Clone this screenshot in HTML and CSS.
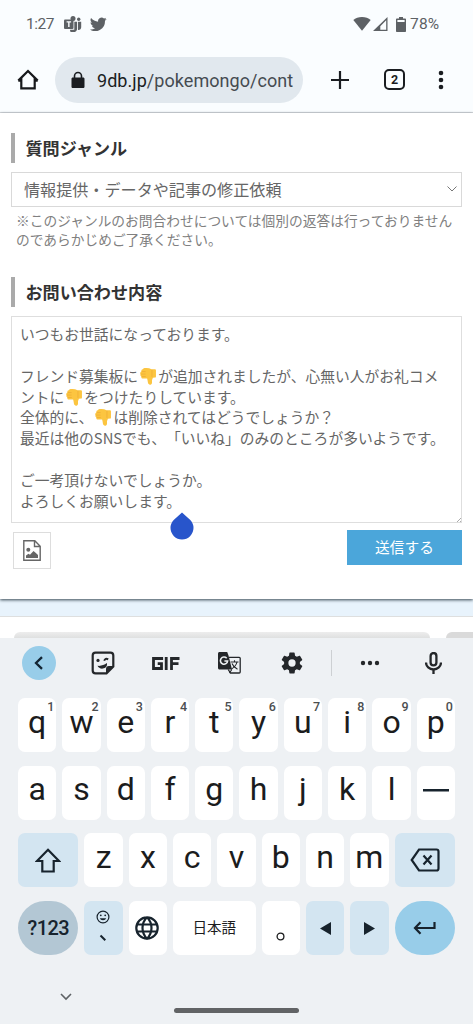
FILE: index.html
```
<!DOCTYPE html>
<html lang="ja">
<head>
<meta charset="utf-8">
<title>お問い合わせ</title>
<link rel="stylesheet" href="styles.css">
</head>
<body>
<svg class="defs" width="0" height="0">
  <symbol id="thumb" viewBox="0 0 18 19">
    <path fill="#fcc540" d="M2.200 4.700C1.700 3.400 2.300 2.500 3.400 2.400 4 1.200 5 1 6.300 1c2.300-.2 4.500.2 6.400 1.300h3.700c.6 0 1 .4 1 1v6.900c0 .6-.4 1-1 1l-2.200.2c-.6 1.400-1 2.300-1 3.500.1 1.500.2 3-1 3.600-1.600.7-3-.3-3.300-2.100-.3-1.500-.3-2.800-.8-4.200H3.700c-1.500-.1-2-1.100-1.600-2.200C.9 9.500.6 8.600 1.200 7.600.3 6.600.9 5.200 2.200 4.700z"/>
    <path fill="none" stroke="#eba934" stroke-width=".7" d="M2.200 4.800h4.300M1.400 7.500h5M2.200 10h4.500M13.200 3v7.500"/>
  </symbol>
</svg>

<header class="statusbar">
  <span class="clock">1:27</span>
  <svg class="teams" width="18" height="16" viewBox="0 0 18 16"><circle cx="9" cy="2.500" r="2.500"/><circle cx="14.700" cy="3.200" r="1.700"/><rect y="3.500" width="9.500" height="9.500" rx="1"/><path d="M10.300 5.700h2.800v7.500a4.200 4.200 0 0 1-7 2.100v-1.500h4.200zM14 5.700h3.200v5.600c0 1.700-1.300 2.800-3.200 2.600z"/><path d="M2.600 5.900h4.500M4.850 5.900v5" fill="none" stroke="#fafdff" stroke-width="1.400"/></svg>
  <svg class="bird" width="17" height="14" viewBox="0 2 24 20"><path d="M23.600 4.900a9.600 9.600 0 0 1-2.800.8 4.900 4.900 0 0 0 2.100-2.700 9.800 9.800 0 0 1-3.100 1.200 4.900 4.900 0 0 0-8.300 4.500A13.800 13.800 0 0 1 1.400 3.600a4.900 4.900 0 0 0 1.500 6.500 4.800 4.800 0 0 1-2.200-.6 4.900 4.900 0 0 0 3.900 4.900 5 5 0 0 1-2.200.1 4.900 4.900 0 0 0 4.600 3.400A9.800 9.800 0 0 1-.2 19.900 13.800 13.800 0 0 0 21.200 7.500a9.800 9.800 0 0 0 2.400-2.600z"/></svg>
  <span class="spacer"></span>
  <svg width="18" height="14" viewBox="0 0 18 14"><path d="M9 0C5.500 0 2.500 1.200.3 3.100L9 13.800l8.700-10.700C15.500 1.200 12.500 0 9 0z"/></svg>
  <svg class="signal" width="15" height="14" viewBox="0 0 15 14"><path d="M14.500 0v14H0zM13.200 3.200 7.300 9.200V12.700h5.900z" fill-rule="evenodd"/></svg>
  <svg class="battery" width="10" height="15" viewBox="0 0 10 15"><path d="M3 0h4v1.400h2.200c.5 0 .8.300.8.800v12c0 .5-.3.800-.8.800H.8c-.5 0-.8-.3-.8-.8v-12c0-.5.300-.8.800-.8H3zM1.400 2.900v2h7.200v-2z" fill-rule="evenodd"/></svg>
  <span class="percent">78%</span>
</header>

<nav class="toolbar">
  <svg class="home" width="22" height="22" viewBox="0 0 22 22"><path d="M4.300 9v10.300h13.400V9M1.300 11.600 11 2l9.700 9.600M4.300 11.600H1.300M17.700 11.600h3"/></svg>
  <div class="address">
    <svg width="14" height="18" viewBox="0 0 14 18"><path d="M2.700 6.500V5a4.300 4.300 0 0 1 8.600 0v1.500h.9c.7 0 1.300.6 1.300 1.300v7.900c0 .7-.6 1.300-1.300 1.300H1.800c-.7 0-1.300-.6-1.300-1.300V7.800c0-.7.6-1.300 1.300-1.300zM4.300 6.500h5.400V5a2.700 2.700 0 0 0-5.400 0z" fill-rule="evenodd"/></svg>
    <span class="url"><b>9db.jp</b>/pokemongo/cont</span>
  </div>
  <svg class="plus" width="20" height="20" viewBox="0 0 20 20"><path d="M10 1v18M1 10h18"/></svg>
  <span class="tabs">2</span>
  <svg class="more" width="6" height="20" viewBox="0 0 6 20"><circle cx="3" cy="3" r="2.300"/><circle cx="3" cy="10" r="2.300"/><circle cx="3" cy="17" r="2.300"/></svg>
</nav>

<main class="page">
  <h2>質問ジャンル</h2>
  <div class="select"><span>情報提供・データや記事の修正依頼</span><svg width="10" height="6" viewBox="0 0 10 6"><path d="M.5.500 5 5 9.500.5"/></svg></div>
  <p class="note">※このジャンルのお問合わせについては個別の返答は行っておりません<br>のであらかじめご了承ください。</p>
  <h2 class="second">お問い合わせ内容</h2>
  <div class="message">
    <p>いつもお世話になっております。</p>
    <p>&nbsp;</p>
    <p>フレンド募集板に<svg class="emoji"><use href="#thumb"/></svg>が追加されましたが、心無い人がお礼コメ</p>
    <p>ントに<svg class="emoji"><use href="#thumb"/></svg>をつけたりしています。</p>
    <p>全体的に、<svg class="emoji"><use href="#thumb"/></svg>は削除されてはどうでしょうか？</p>
    <p>最近は他のSNSでも、「いいね」のみのところが多いようです。</p>
    <p>&nbsp;</p>
    <p>ご一考頂けないでしょうか。</p>
    <p>よろしくお願いします。</p>
    <svg class="resize" width="4" height="4" viewBox="0 0 4 4"><path d="M4 0 0 4M4 3 3 4"/></svg>
    <svg class="handle" width="24" height="28" viewBox="0 0 24 28"><path d="M12 .5 20.300 8a11.500 11.500 0 1 1-16.600 0z"/></svg>
  </div>
  <div class="actions">
    <span class="attach"><svg width="18" height="21" viewBox="0 0 18 21"><path d="M.8.800h11l5.400 5.400v14H.8zM11.500 1v5.500H17" fill="none" stroke="#666" stroke-width="1.400"/><circle cx="5.300" cy="9.800" r="2"/><path d="M3 18v-2.500l2.500-1.800 1.500 1 3.500-3.700 1.800 1.500 2.700 2.500v3z"/></svg></span>
    <span class="submit">送信する</span>
  </div>
</main>
<div class="band"></div>
<div class="below"><i></i><i></i></div>

<section class="keyboard">
  <div class="tools">
    <span class="back"><svg width="10" height="14" viewBox="0 0 10 14"><path d="M8 1.200 2 7l6 5.800"/></svg></span>
    <svg class="sticker" width="24" height="24" viewBox="0 0 24 24"><path d="M4.500 1.700h15a2.800 2.800 0 0 1 2.800 2.800v11l-6.800 6.800h-11a2.800 2.800 0 0 1-2.800-2.800v-15a2.800 2.800 0 0 1 2.800-2.800z" fill="none" stroke="#24272a" stroke-width="2.200"/><path d="M22.500 15l-7.500 7.500v-4.600a2.900 2.900 0 0 1 2.900-2.900zM6.500 14.800c3.200.5 6.800-.7 9.300-2.700 1 3-1.300 5.100-3.900 5.500-2.300.3-4.500-.8-5.400-2.800z"/><circle cx="7" cy="9.400" r="1.600"/><path d="M13.200 9.800q1-3.300 4-1.400" fill="none" stroke="#24272a" stroke-width="1.900"/></svg>
    <svg class="gif" width="28" height="13" viewBox="0 0 28 13"><path d="M9.700 3V1.500H1.500v10h8V6.700H5.700M14.200 0v13M19.500 13V1.500h8M19.500 6.700h7"/></svg>
    <svg class="translate" width="23" height="22" viewBox="0 0 23 22"><path d="M11 5.300h10.200c.6 0 1 .4 1 1V20c0 .6-.4 1-1 1h-8.700l-2.300-3.500" fill="none" stroke="#24272a" stroke-width="1.300"/><path d="M1.500 0h7.700l1.300 3.500L14 17.500H1.500C.7 17.500 0 16.800 0 16V1.500C0 .7.700 0 1.500 0z"/><path d="M8.700 6.200A3.600 3.600 0 1 0 9.600 9H6.400" fill="none" stroke="#eff2f4" stroke-width="1.600"/><path d="M12.500 10h8M16.500 8.200V10M19 10c-.7 3-3 5.500-5.500 7M14 11.500c1 2.500 3 4.400 5.500 5.700M11.500 21l2.300-3.500" fill="none" stroke="#24272a" stroke-width="1.100"/></svg>
    <svg class="gear" width="22" height="22" viewBox="2 2 20 20"><path d="M19.140 12.940c.04-.3.060-.61.060-.94s-.02-.64-.07-.94l2.030-1.580c.18-.14.230-.41.120-.61l-1.920-3.320c-.12-.22-.37-.29-.59-.22l-2.390.96c-.5-.38-1.030-.7-1.620-.94l-.36-2.540A.48.480 0 0 0 13.920 2.400h-3.840c-.24 0-.43.170-.47.410l-.36 2.540c-.59.240-1.130.57-1.620.94l-2.390-.96c-.22-.08-.47 0-.59.220L2.740 8.870c-.12.210-.08.470.12.610l2.030 1.580c-.05.300-.09.630-.09.940s.02.640.070.940l-2.030 1.580c-.18.140-.23.410-.12.610l1.920 3.320c.12.220.37.290.59.220l2.390-.96c.5.380 1.030.7 1.620.94l.36 2.540c.05.240.24.410.48.410h3.840c.24 0 .44-.17.470-.41l.36-2.540c.59-.24 1.130-.56 1.620-.94l2.390.96c.22.080.47 0 .59-.22l1.920-3.320c.12-.22.070-.47-.12-.61zM12 15.300a3.300 3.300 0 1 1 0-6.600 3.300 3.300 0 0 1 0 6.600z"/></svg>
    <span class="rule"></span>
    <svg class="dots" width="20" height="6" viewBox="0 0 20 6"><circle cx="3" cy="3" r="2.200"/><circle cx="10" cy="3" r="2.200"/><circle cx="17" cy="3" r="2.200"/></svg>
    <svg class="mic" width="17" height="22" viewBox="0 0 17 22"><rect x="5.600" y="1" width="5.800" height="12.400" rx="2.900"/><path d="M1 10.500a7.500 7 0 0 0 15 0M8.500 17.500V22"/></svg>
  </div>
  <div class="keys">
    <div class="row">
      <span class="key">q<sup>1</sup></span><span class="key">w<sup>2</sup></span><span class="key">e<sup>3</sup></span><span class="key">r<sup>4</sup></span><span class="key">t<sup>5</sup></span><span class="key">y<sup>6</sup></span><span class="key">u<sup>7</sup></span><span class="key">i<sup>8</sup></span><span class="key">o<sup>9</sup></span><span class="key">p<sup>0</sup></span>
    </div>
    <div class="row">
      <span class="key">a</span><span class="key">s</span><span class="key">d</span><span class="key">f</span><span class="key">g</span><span class="key">h</span><span class="key">j</span><span class="key">k</span><span class="key">l</span><span class="key icon dash"><svg width="26" height="3"><rect width="26" height="2.500"/></svg></span>
    </div>
    <div class="row">
      <span class="key icon side tint"><svg width="26" height="25" viewBox="0 0 26 25"><path class="line" d="M13 1.800 24 13h-5.300v10.500H7.300V13H2z"/></svg></span>
      <span class="key">z</span><span class="key">x</span><span class="key">c</span><span class="key">v</span><span class="key">b</span><span class="key">n</span><span class="key">m</span>
      <span class="key icon side tint"><svg width="30" height="24" viewBox="0 0 30 24"><path class="line" d="M9 1.500h17.500a2 2 0 0 1 2 2v17a2 2 0 0 1-2 2H9L1.700 12zM13.500 7.500l8 9M21.500 7.500l-8 9"/></svg></span>
    </div>
    <div class="row">
      <span class="key side round symbols">?123</span>
      <span class="key emojikey tint"><svg width="14" height="14" viewBox="0 0 14 14"><circle cx="7" cy="7" r="5.900" fill="none" stroke="#17232d" stroke-width="1.200"/><circle cx="4.800" cy="5.300" r=".9"/><circle cx="9.200" cy="5.300" r=".9"/><path d="M3.800 8.300h6.400a3.300 2.600 0 0 1-6.400 0z"/></svg><svg width="8" height="8" viewBox="0 0 8 8"><path d="m1.500 1.500 4.800 4.800" stroke="#17232d" stroke-width="2"/></svg></span>
      <span class="key icon globe"><svg width="24" height="24" viewBox="0 0 24 24"><path class="line" d="M12 1.300a10.700 10.700 0 1 0 0 21.400 10.700 10.700 0 0 0 0-21.400c-6 6-6 15.400 0 21.400 6-6 6-15.400 0-21.400M2 8.500h20M2 15.500h20"/></svg></span>
      <span class="key space">日本語</span>
      <span class="key icon period"><svg width="9" height="9" viewBox="0 0 9 9"><circle cx="4.500" cy="4.500" r="3.400" fill="none" stroke="#1b1c1d" stroke-width="1.300"/></svg></span>
      <span class="key icon tint"><svg width="11" height="13" viewBox="0 0 11 13"><path d="M11 0v13L0 6.500z"/></svg></span>
      <span class="key icon tint"><svg width="11" height="13" viewBox="0 0 11 13"><path d="M0 0v13l11-6.500z"/></svg></span>
      <span class="key icon side round enter"><svg width="23" height="14" viewBox="0 0 23 14"><path class="line" d="M21.500 1v6H2M7.500 1.200 2 7l5.500 5.800"/></svg></span>
    </div>
  </div>
  <div class="navbar">
    <svg width="12" height="8" viewBox="0 0 12 8"><path d="m1 1 5 5 5-5"/></svg>
    <span class="pill"></span>
  </div>
</section>
</body>
</html>
```
FILE: styles.css
```
* { box-sizing: border-box; }
html, body { margin: 0; padding: 0; }
body {
  width: 473px; height: 1024px; overflow: hidden;
  display: flex; flex-direction: column;
  background: #fff; color: #666;
  font-family: Roboto, "Noto Sans CJK JP", sans-serif;
  text-spacing-trim: space-all;
}
svg { display: block; flex: none; }
.defs { position: absolute; }
.spacer { flex: 1; }

.statusbar {
  flex: none; height: 48px; padding: 0 31px 0 26px;
  display: flex; align-items: center;
  background: #fafdff; color: #5d6165; fill: #5d6165;
  font-size: 15.500px;
}
.clock { width: 38px; letter-spacing: -.5px; }
.teams { margin-right: 8px; }
.signal { margin-left: 2px; }
.battery { margin: 0 4px 0 8px; }
.percent { width: 32px; white-space: nowrap; letter-spacing: .2px; }

.toolbar {
  flex: none; height: 65px; padding: 0 29px 1px 17px;
  display: flex; align-items: center;
  background: #fafdff; border-bottom: 1px solid #dadde0;
  fill: #1a1d21;
}
.home { fill: none; stroke: #17191c; stroke-width: 2.200; }
.address {
  width: 248px; height: 46px; margin-left: 16px; padding-left: 16px;
  border-radius: 23px; background: #e1e8ee;
  display: flex; align-items: center; gap: 12px;
}
.url { padding-top: 1px; font-size: 18px; letter-spacing: .05px; color: #454b51; white-space: nowrap; }
.url b { font-weight: 400; color: #1a1d21; }
.plus { margin-left: 27px; stroke: #1a1d21; stroke-width: 2.200; }
.tabs {
  width: 21px; height: 21px; margin-left: 34px;
  border: 2px solid #1a1d21; border-radius: 5px;
  color: #1a1d21; font-size: 12.500px; font-weight: 700; line-height: 18px; text-align: center;
}
.more { margin-left: 33px; }

.page {
  flex: none; height: 486px; padding: 20px 11px 0;
  display: flex; flex-direction: column;
  font-family: "Noto Sans CJK JP", sans-serif;
  box-shadow: 0 1px 3px #34444f; position: relative;
}
h2 {
  margin: 0; height: 30px; padding-left: 10.500px;
  border-left: 4px solid #aaa; color: #333;
  font-size: 17.100px; font-weight: 700; line-height: 30px;
}
.select {
  height: 35px; margin-top: 9px; padding: 0 4px 2px 12px;
  border: 1px solid #d9d9d9;
  display: flex; align-items: center; justify-content: space-between;
  font-size: 16.100px;
}
.select svg { fill: none; stroke: #777; stroke-width: 1; }
.note {
  margin: 4px 0 0 5px; color: #808080;
  font-size: 13.720px; line-height: 19px; white-space: nowrap;
}
.second { margin-top: 28px; }
.message {
  position: relative; height: 207px; margin-top: 9px; padding: 7px 8px;
  border: 1px solid #dedede;
  font-size: 14.780px; line-height: 20.850px; white-space: nowrap;
}
.message p { margin: 0; height: 20.850px; }
.emoji { display: inline-block; width: 18px; height: 18px; margin: 0 1px; vertical-align: -3px; }
.resize { position: absolute; right: 0; bottom: 0; stroke: #888; stroke-width: .7; }
.handle { position: absolute; left: 157.500px; top: 195px; fill: #2855cb; }
.actions { display: flex; justify-content: space-between; padding: 7px 0 0 2px; }
.attach {
  width: 38px; height: 37px; margin-top: 2px; border: 1px solid #ddd;
  display: flex; align-items: center; justify-content: center; fill: #666;
}
.submit {
  width: 115px; height: 35px; background: #4ba6da; color: #fff;
  font-size: 14.700px; line-height: 34px; text-align: center;
}
.band { flex: none; height: 18px; background: #e8f3fc; border-bottom: 1px solid #dedfdf; }
.below { flex: none; height: 21px; padding-top: 15px; display: flex; justify-content: space-between; }
.below i { height: 6px; background: linear-gradient(#ededed, #dfe0e0); }
.below i:first-child { width: 416px; margin-left: 14px; border-radius: 8px 8px 0 0; }
.below i:last-child { width: 27px; background: #dadada; border-radius: 8px 0 0 0; }

.keyboard { flex: 1; background: #eef1f4; display: flex; flex-direction: column; }
.tools { height: 60px; padding: 0 31px 10px 22px; display: flex; align-items: center; fill: #24272a; }
.back {
  width: 34px; height: 34px; border-radius: 50%; background: #98cde9;
  display: flex; align-items: center; justify-content: center;
}
.back svg { fill: none; stroke: #132533; stroke-width: 2.300; }
.sticker { margin-left: 35px; }
.gif { margin-left: 37px; fill: none; stroke: #24272a; stroke-width: 2.800; }
.translate { margin-left: 38px; }
.gear { margin-left: 40px; }
.rule { width: 1px; height: 26px; margin-left: 28px; background: #cdd0d3; }
.dots { margin-left: 28px; }
.mic { margin-left: 45px; fill: none; stroke: #24272a; stroke-width: 2.300; }

.keys { height: 257px; padding: 0 18px; display: flex; flex-direction: column; gap: 13.600px; }
.row { flex: 1; display: flex; gap: 6px; }
.key {
  position: relative; width: 38.300px; flex: none; padding-bottom: 7px;
  display: flex; align-items: center; justify-content: center;
  border-radius: 7px; background: #fff; color: #1b1c1d; fill: #17232d;
  font-size: 32px; line-height: 1;
}
.key sup { position: absolute; right: 2px; top: 3px; font-size: 12.500px; line-height: 12px; font-weight: 500; color: #4b4e50; }
.icon { padding: 0; }
.dash { padding-bottom: 4px; }
.side { width: 60.450px; }
.tint { background: #d3e5f1; }
.round { border-radius: 27px; }
.line { fill: none; stroke: #17232d; stroke-width: 2.200; }
.symbols { padding: 0; background: #b3c7d4; color: #17232d; font-size: 20px; letter-spacing: -.6px; font-weight: 500; }
.emojikey { flex-direction: column; justify-content: flex-start; gap: 10px; padding-top: 9px; padding-right: 1px; }
.globe, .enter { padding-right: 1px; }
.space { width: 82.600px; padding: 0 0 1px; font-size: 14.600px; font-family: "Noto Sans CJK JP", sans-serif; }
.period { padding-top: 17px; }
.enter { background: #98cde9; }
.navbar { flex: 1; padding: 38px 0 0 60px; display: flex; align-items: flex-start; }
.navbar svg { fill: none; stroke: #5e6265; stroke-width: 1.600; }
.pill { width: 125px; height: 5px; margin: 15px 0 0 102px; border-radius: 3px; background: #616365; }
```
